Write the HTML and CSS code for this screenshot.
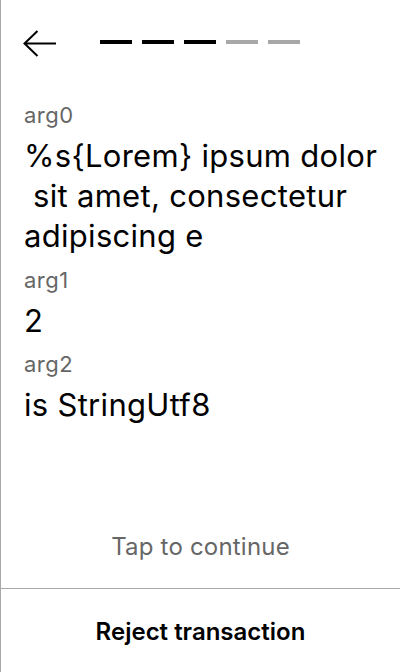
FILE: index.html
```html
<!DOCTYPE html>
<html lang="en">
<head>
<meta charset="utf-8">
<title>Review transaction</title>
<link rel="stylesheet" href="styles.css">
</head>
<body>
<div class="screen">
  <header class="header">
    <svg class="back" width="34" height="28" viewBox="0 0 34 28" aria-label="Back">
      <path d="M14.5 1 L1.5 13.5 L14.5 26 M1.5 13.5 H33" fill="none" stroke="#000" stroke-width="2"/>
    </svg>
    <div class="steps">
      <span class="step done"></span>
      <span class="step done"></span>
      <span class="step done"></span>
      <span class="step"></span>
      <span class="step"></span>
    </div>
  </header>
  <main class="content">
    <div class="label first">arg0</div>
    <div class="value">%s{Lorem} ipsum dolor
 sit amet, consectetur
adipiscing e</div>
    <div class="label">arg1</div>
    <div class="value">2</div>
    <div class="label">arg2</div>
    <div class="value">is StringUtf8</div>
  </main>
  <div class="tap">Tap to continue</div>
  <footer class="footer">Reject transaction</footer>
</div>
</body>
</html>
```
FILE: styles.css
```css
html, body {
  margin: 0;
  padding: 0;
  background: #fff;
}
body {
  font-family: Inter, "Noto Sans", sans-serif;
  color: #000;
}
.screen {
  width: 400px;
  height: 672px;
  box-sizing: border-box;
  border-left: 1px solid #a8a8a8;
  display: flex;
  flex-direction: column;
}
.header {
  display: flex;
  align-items: flex-start;
  padding: 30px 0 0 22px;
  height: 58px;
}
.back {
  display: block;
}
.steps {
  display: flex;
  gap: 10px;
  margin: 10px 0 0 43px;
}
.step {
  width: 32px;
  height: 4px;
  background: #a8a8a8;
}
.step.done {
  background: #000;
}
.content {
  flex: 1;
  padding: 15px 8px 0 23px;
  display: flex;
  flex-direction: column;
}
.label {
  font-size: 22px;
  line-height: 24px;
  letter-spacing: 0.5px;
  color: #666;
  margin-top: 11.5px;
}
.label.first {
  margin-top: 0;
}
.value {
  font-size: 31px;
  line-height: 40px;
  letter-spacing: 0.3px;
  margin-top: 9px;
  white-space: pre-wrap;
}
.tap {
  text-align: center;
  font-size: 24px;
  line-height: 28px;
  letter-spacing: 0.2px;
  color: #666;
  padding-bottom: 27px;
}
.footer {
  border-top: 1px solid #a8a8a8;
  height: 84px;
  box-sizing: border-box;
  display: flex;
  align-items: center;
  justify-content: center;
  padding-top: 2px;
  font-size: 24px;
  line-height: 28px;
  font-weight: 600;
}
```
